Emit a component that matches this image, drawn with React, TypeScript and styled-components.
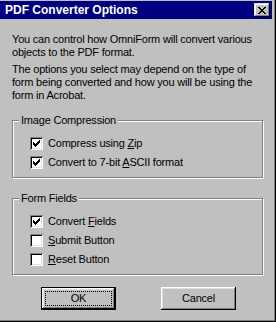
import React from "react";
import styled, { createGlobalStyle } from "styled-components";

const Global = createGlobalStyle`
  html, body { margin: 0; padding: 0; background: #c0c0c0; }
  body { font-family: "Liberation Sans", Arial, sans-serif; }
`;

const Window = styled.div`
  width: 276px;
  height: 322px;
  box-sizing: border-box;
  padding: 1px 4px 4px 0;
  background: #c0c0c0;
  box-shadow: inset -1px -1px #000, inset -2px -2px #808080;
  display: flex;
  flex-direction: column;
  font-size: 11px;
  letter-spacing: -0.2px;
  color: #000;
`;

const TitleBar = styled.div`
  height: 18px;
  background: #000080;
  display: flex;
  align-items: center;
  justify-content: space-between;
  padding: 0 2px 0 5px;
`;

const Title = styled.span`
  color: #fff;
  font-weight: bold;
  font-size: 12px;
  letter-spacing: 0;
  line-height: 18px;
`;

const CloseButton = styled.button`
  width: 16px;
  height: 14px;
  padding: 0;
  border: 0;
  background: #c0c0c0;
  box-shadow: inset -1px -1px #000, inset 1px 1px #dfdfdf, inset -2px -2px #808080, inset 2px 2px #fff;
  display: flex;
  align-items: center;
  justify-content: center;
  svg { display: block; }
`;

const Body = styled.div`
  padding: 14px 9px 0 12px;
  display: flex;
  flex-direction: column;
`;

const Paragraph = styled.p<{ $top?: number }>`
  margin: ${(p) => p.$top ?? 0}px 0 0 0;
  line-height: 13px;
`;

const GroupBox = styled.div<{ $top: number }>`
  position: relative;
  margin-top: ${(p) => p.$top}px;
  border: 1px solid #808080;
  box-shadow: inset 1px 1px #fff, 1px 1px #fff;
  padding: 16px 0 8px 17px;
  display: flex;
  flex-direction: column;
  gap: 6px;
`;

const GroupLabel = styled.span`
  position: absolute;
  top: -7px;
  left: 6px;
  padding: 0 2px;
  background: #c0c0c0;
  line-height: 13px;
`;

const Row = styled.label`
  display: flex;
  align-items: center;
  gap: 5px;
  height: 13px;
  line-height: 13px;
`;

const Box = styled.span`
  width: 13px;
  height: 13px;
  box-sizing: border-box;
  background: #fff;
  box-shadow: inset 1px 1px #808080, inset -1px -1px #fff, inset 2px 2px #000, inset -2px -2px #dfdfdf;
  display: flex;
  align-items: flex-start;
  justify-content: flex-start;
  padding: 3px;
  flex: none;
  svg { display: block; }
`;

const ButtonRow = styled.div`
  margin-top: 12px;
  display: flex;
  gap: 45px;
  padding-left: 29px;
`;

const Button = styled.button<{ $default?: boolean }>`
  width: 75px;
  height: 23px;
  box-sizing: border-box;
  padding: 0;
  font: inherit;
  letter-spacing: inherit;
  color: #000;
  background: #c0c0c0;
  border: ${(p) => (p.$default ? "1px solid #000" : "0")};
  box-shadow: inset -1px -1px #000, inset 1px 1px #fff, inset -2px -2px #808080, inset 2px 2px #dfdfdf;
  display: flex;
`;

const ButtonFace = styled.span<{ $focus?: boolean }>`
  flex: 1;
  display: flex;
  align-items: center;
  justify-content: center;
  margin: 3px;
  border: 1px ${(p) => (p.$focus ? "dotted #000" : "solid transparent")};
  line-height: 13px;
`;

const Check = () => (
  <svg width="7" height="7" viewBox="0 0 7 7" shapeRendering="crispEdges">
    <path
      fill="#000"
      d="M6 0h1v1h-1zM5 1h2v1h-2zM0 2h1v1h-1zM4 2h3v1h-3zM0 3h2v1h-2zM3 3h3v1h-3zM0 4h5v1h-5zM1 5h3v1h-3zM2 6h1v1h-1z"
    />
  </svg>
);

const CloseGlyph = () => (
  <svg width="8" height="7" viewBox="0 0 8 7" shapeRendering="crispEdges">
    <path
      fill="#000"
      d="M0 0h2v1h-2zM6 0h2v1h-2zM1 1h2v1h-2zM5 1h2v1h-2zM2 2h4v1h-4zM3 3h2v1h-2zM2 4h4v1h-4zM1 5h2v1h-2zM5 5h2v1h-2zM0 6h2v1h-2zM6 6h2v1h-2z"
    />
  </svg>
);

type Opt = { before: string; key: string; after: string; checked: boolean };

const Option = ({ o }: { o: Opt }) => (
  <Row>
    <Box>{o.checked && <Check />}</Box>
    <span>
      {o.before}
      <u>{o.key}</u>
      {o.after}
    </span>
  </Row>
);

const imageOpts: Opt[] = [
  { before: "Compress using ", key: "Z", after: "ip", checked: true },
  { before: "Convert to 7-bit ", key: "A", after: "SCII format", checked: true },
];

const fieldOpts: Opt[] = [
  { before: "Convert ", key: "F", after: "ields", checked: true },
  { before: "", key: "S", after: "ubmit Button", checked: false },
  { before: "", key: "R", after: "eset Button", checked: false },
];

export default function App() {
  return (
    <>
      <Global />
      <Window>
        <TitleBar>
          <Title>PDF Converter Options</Title>
          <CloseButton aria-label="Close">
            <CloseGlyph />
          </CloseButton>
        </TitleBar>
        <Body>
          <Paragraph>
            You can control how OmniForm will convert various objects to the PDF format.
          </Paragraph>
          <Paragraph $top={4}>
            The options you select may depend on the type of form being converted and how you
            will be using the form in Acrobat.
          </Paragraph>
          <GroupBox $top={18}>
            <GroupLabel>Image Compression</GroupLabel>
            {imageOpts.map((o) => (
              <Option key={o.key} o={o} />
            ))}
          </GroupBox>
          <GroupBox $top={20}>
            <GroupLabel>Form Fields</GroupLabel>
            {fieldOpts.map((o) => (
              <Option key={o.key} o={o} />
            ))}
          </GroupBox>
          <ButtonRow>
            <Button $default>
              <ButtonFace $focus>OK</ButtonFace>
            </Button>
            <Button>
              <ButtonFace>Cancel</ButtonFace>
            </Button>
          </ButtonRow>
        </Body>
      </Window>
    </>
  );
}
